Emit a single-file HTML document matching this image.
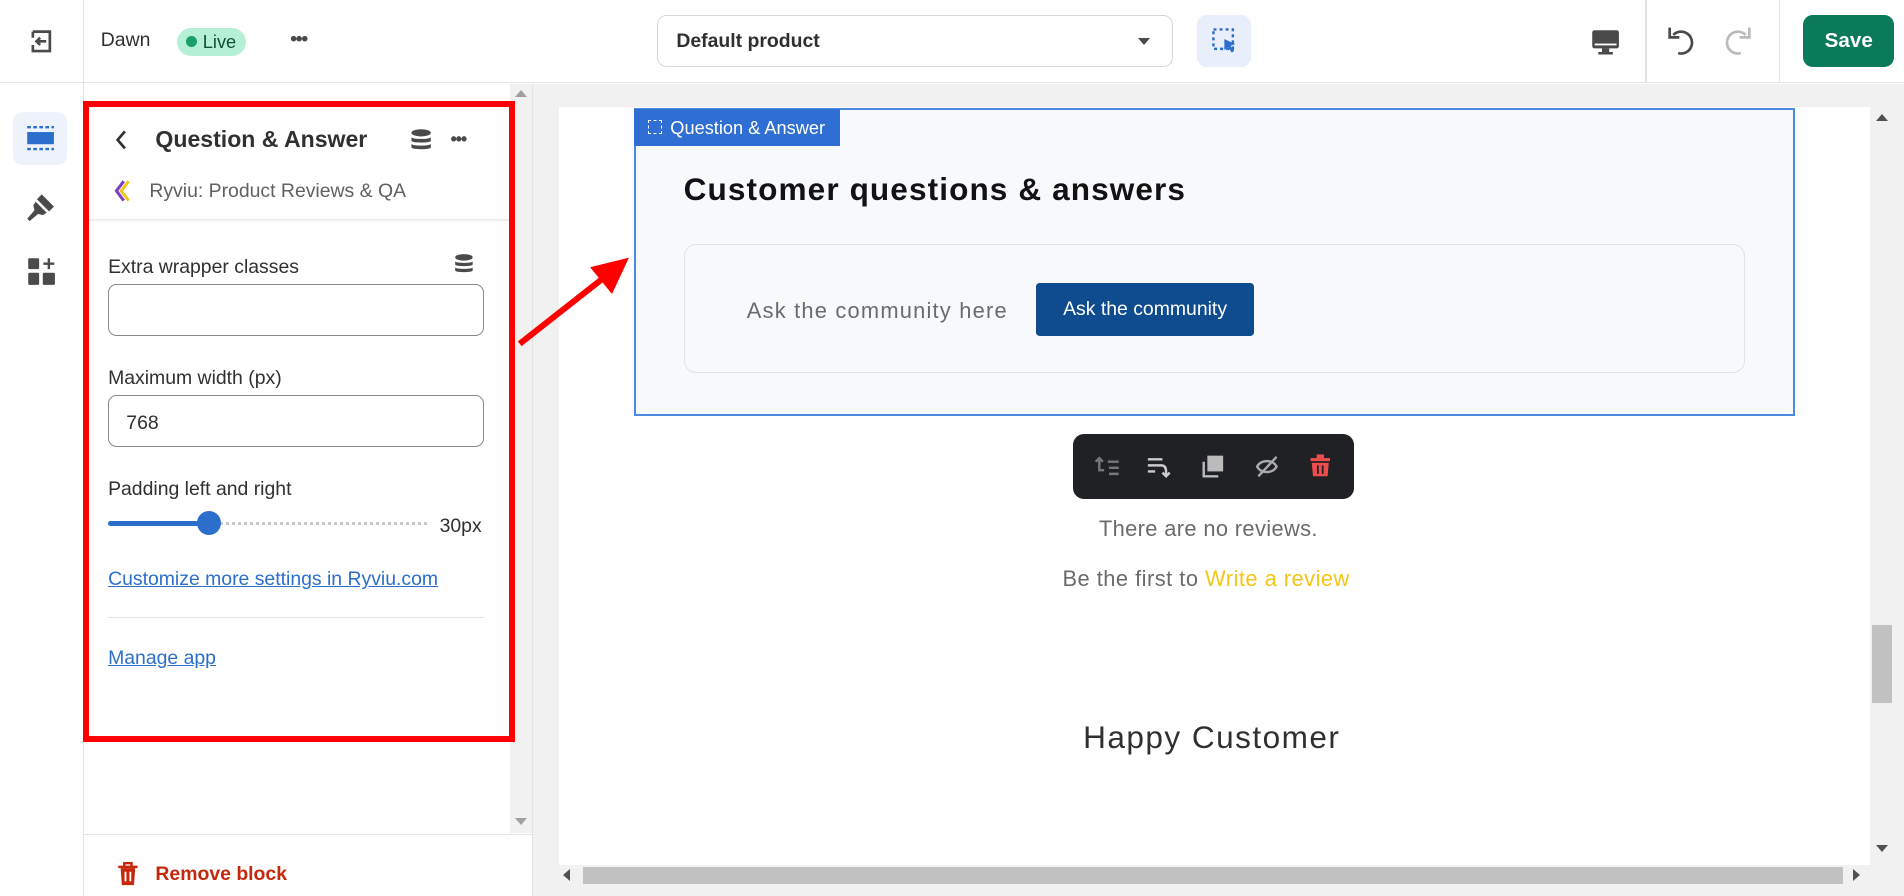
<!DOCTYPE html>
<html><head><meta charset="utf-8"><style>
*{box-sizing:border-box;margin:0;padding:0}
html,body{width:1904px;height:896px;overflow:hidden;background:#fff}
#root{zoom:1.21429;width:1568px;height:738px;position:relative;font-family:"Liberation Sans",sans-serif;color:#303030;overflow:hidden}
.a{position:absolute}
.t{position:absolute;white-space:nowrap}
svg{display:block}
</style></head><body><div id="root">
<div class="a" style="left:0;top:0;width:1568px;height:68px;border-bottom:1px solid #e3e3e3;background:#fff"></div>
<div class="a" style="left:68px;top:0;width:1px;height:738px;background:#e3e3e3"></div>
<svg class="a" style="left:23px;top:23px" width="22" height="22" viewBox="0 0 22 22"><path d="M4 3h14v16H4v-5M4 8V3" fill="none" stroke="#4a4a4a" stroke-width="2.2"/><path d="M15 11H7m3-3-3 3 3 3" fill="none" stroke="#4a4a4a" stroke-width="2.2"/></svg>
<div class="t" style="left:83px;top:24px;font-size:16px">Dawn</div>
<div class="a" style="left:146px;top:23px;width:57px;height:23px;border-radius:12px;background:#b4efd6"></div>
<div class="a" style="left:153px;top:30px;width:9px;height:9px;border-radius:50%;background:#1a9e6a"></div>
<div class="t" style="left:167px;top:26px;font-size:15px;color:#0c5132">Live</div>
<div class="t" style="left:239px;top:23px;font-size:16px;letter-spacing:-1px;color:#4a4a4a;font-weight:bold">•••</div>
<div class="a" style="left:541px;top:12px;width:425px;height:43px;border:1px solid #d6d6d6;border-radius:8px"></div>
<div class="t" style="left:557px;top:25px;font-size:16px;font-weight:bold;color:#303030">Default product</div>
<div class="a" style="left:937px;top:31px;width:0;height:0;border-left:5px solid transparent;border-right:5px solid transparent;border-top:6px solid #4a4a4a"></div>
<div class="a" style="left:986px;top:12px;width:44px;height:43px;border-radius:8px;background:#e8eefa"></div>
<svg class="a" style="left:997px;top:22px" width="24" height="24" viewBox="0 0 24 24"><rect x="2" y="2" width="16" height="16" fill="none" stroke="#2c6ecb" stroke-width="2" stroke-dasharray="2.5 2.5"/><path d="M11 10l9 4-4 1.5L19 20l-2 1-3-4.5-3 2.5z" fill="#2c6ecb"/></svg>
<svg class="a" style="left:1310px;top:24px" width="24" height="22" viewBox="0 0 24 22"><rect x="1" y="1" width="22" height="15" rx="2" fill="#4a4a4a"/><rect x="3" y="12" width="18" height="1.5" fill="#fff"/><path d="M9 16h6v3h3v2H6v-2h3z" fill="#4a4a4a"/></svg>
<div class="a" style="left:1355px;top:0;width:1px;height:68px;background:#e3e3e3"></div>
<svg class="a" style="left:1372px;top:20px" width="28" height="28" viewBox="0 0 28 28"><path d="M6 9a9 9 0 1 1 4 15" fill="none" stroke="#4a4a4a" stroke-width="2.2"/><path d="M3 3v8h8" fill="none" stroke="#4a4a4a" stroke-width="2.2"/></svg>
<svg class="a" style="left:1416px;top:20px" width="28" height="28" viewBox="0 0 28 28"><path d="M22 9a9 9 0 1 0-4 15" fill="none" stroke="#bbb" stroke-width="2.2"/><path d="M25 3v8h-8" fill="none" stroke="#bbb" stroke-width="2.2"/></svg>
<div class="a" style="left:1465px;top:0;width:1px;height:68px;background:#e3e3e3"></div>
<div class="a" style="left:1485px;top:12px;width:75px;height:43px;border-radius:8px;background:#0b7a5b;color:#fff;font-weight:bold;font-size:17px;text-align:center;line-height:43px">Save</div>
<div class="a" style="left:11px;top:92px;width:44px;height:44px;border-radius:8px;background:#eef2fb"></div>
<svg class="a" style="left:21px;top:104px" width="24" height="20" viewBox="0 0 24 20"><path d="M1 1h22M1 19h22" stroke="#2c6ecb" stroke-width="2" stroke-dasharray="3 2"/><rect x="1" y="5" width="22" height="10" fill="#2c6ecb"/></svg>
<svg class="a" style="left:21px;top:158px" width="26" height="26" viewBox="0 0 26 26"><path d="M13 2l10 10-4 4-10-10z" fill="#4a4a4a"/><path d="M8 8l9 9-3 2-4-1-7 6-2-2 6-7-1-4z" fill="#4a4a4a"/></svg>
<svg class="a" style="left:22px;top:212px" width="24" height="24" viewBox="0 0 24 24"><rect x="1" y="1" width="9" height="9" rx="1" fill="#4a4a4a"/><rect x="1" y="13" width="9" height="10" rx="1" fill="#4a4a4a"/><rect x="13" y="13" width="10" height="10" rx="1" fill="#4a4a4a"/><path d="M18 1v9M13.5 5.5h9" stroke="#4a4a4a" stroke-width="2"/></svg>
<div class="a" style="left:420px;top:69px;width:18px;height:617px;background:#f1f1f1"></div>
<div class="a" style="left:424px;top:74px;border-left:5px solid transparent;border-right:5px solid transparent;border-bottom:6px solid #a0a0a0"></div>
<div class="a" style="left:424px;top:674px;border-left:5px solid transparent;border-right:5px solid transparent;border-top:6px solid #a0a0a0"></div>
<div class="a" style="left:438px;top:69px;width:1px;height:669px;background:#e3e3e3"></div>
<div class="a" style="left:73px;top:180px;width:346px;height:3px;background:linear-gradient(#e6e6e6,#fff)"></div>
<svg class="a" style="left:94px;top:106px" width="12" height="18" viewBox="0 0 12 18"><path d="M9 2 3 9l6 7" fill="none" stroke="#303030" stroke-width="2.2"/></svg>
<div class="t" style="left:128px;top:104px;font-size:19px;font-weight:bold;color:#303030">Question &amp; Answer</div>
<svg class="a" style="left:337px;top:105px" width="20" height="20" viewBox="0 0 20 20"><ellipse cx="10" cy="4" rx="8" ry="3" fill="#4a4a4a"/><path d="M2 7.5c0 2 16 2 16 0v3c0 2-16 2-16 0zM2 13c0 2 16 2 16 0v3c0 2-16 2-16 0z" fill="#4a4a4a"/></svg>
<div class="t" style="left:371px;top:106px;font-size:15px;font-weight:bold;letter-spacing:-1px;color:#4a4a4a">•••</div>
<svg class="a" style="left:94px;top:148px" width="14" height="18" viewBox="0 0 14 18"><path d="M8 1 2 9l6 8" fill="none" stroke="#7b3fc4" stroke-width="2.5"/><path d="M12 1 6 9l6 8" fill="none" stroke="#f5c518" stroke-width="2.5"/></svg>
<div class="t" style="left:123px;top:148px;font-size:16px;color:#616161">Ryviu: Product Reviews &amp; QA</div>
<div class="t" style="left:89px;top:211px;font-size:16px">Extra wrapper classes</div>
<svg class="a" style="left:373px;top:208px" width="18" height="18" viewBox="0 0 20 20"><ellipse cx="10" cy="4" rx="8" ry="3" fill="#4a4a4a"/><path d="M2 7.5c0 2 16 2 16 0v3c0 2-16 2-16 0zM2 13c0 2 16 2 16 0v3c0 2-16 2-16 0z" fill="#4a4a4a"/></svg>
<div class="a" style="left:89px;top:234px;width:310px;height:43px;border:1px solid #8a8a8a;border-radius:7px"></div>
<div class="t" style="left:89px;top:302px;font-size:16px">Maximum width (px)</div>
<div class="a" style="left:89px;top:325px;width:310px;height:43px;border:1px solid #8a8a8a;border-radius:7px"></div>
<div class="t" style="left:104px;top:339px;font-size:16px">768</div>
<div class="t" style="left:89px;top:394px;font-size:16px">Padding left and right</div>
<div class="a" style="left:89px;top:429px;width:83px;height:4px;background:#2c6ecb;border-radius:2px"></div>
<div class="a" style="left:172px;top:430px;width:180px;height:2px;border-top:3px dotted #c8c8c8"></div>
<div class="a" style="left:162px;top:421px;width:20px;height:20px;border-radius:50%;background:#2c6ecb"></div>
<div class="t" style="left:362px;top:424px;font-size:16px">30px</div>
<div class="t" style="left:89px;top:468px;font-size:16px;color:#2c6ecb;text-decoration:underline">Customize more settings in Ryviu.com</div>
<div class="a" style="left:89px;top:508px;width:310px;height:1px;background:#e3e3e3"></div>
<div class="t" style="left:89px;top:533px;font-size:16px;color:#2c6ecb;text-decoration:underline">Manage app</div>
<div class="a" style="left:68px;top:83px;width:356px;height:528px;border:5px solid #f00"></div>
<div class="a" style="left:69px;top:687px;width:369px;height:1px;background:#e3e3e3"></div>
<svg class="a" style="left:96px;top:710px" width="18" height="20" viewBox="0 0 18 20"><path d="M1 4h16M6 4V1h6v3" fill="none" stroke="#c5280c" stroke-width="2"/><path d="M3 5l1 14h10l1-14z" fill="#c5280c"/><path d="M7 8v8M11 8v8" stroke="#fff" stroke-width="1.5"/></svg>
<div class="t" style="left:128px;top:711px;font-size:16px;font-weight:bold;color:#c5280c">Remove block</div>
<div class="a" style="left:439px;top:69px;width:1129px;height:669px;background:#f1f1f1"></div>
<div class="a" style="left:460px;top:88px;width:1080px;height:624px;background:#fff"></div>
<div class="a" style="left:1540px;top:88px;width:20px;height:624px;background:#f1f1f1"></div>
<div class="a" style="left:1542px;top:515px;width:16px;height:64px;background:#c1c1c1"></div>
<div class="a" style="left:1545px;top:94px;border-left:5px solid transparent;border-right:5px solid transparent;border-bottom:6px solid #505050"></div>
<div class="a" style="left:1545px;top:696px;border-left:5px solid transparent;border-right:5px solid transparent;border-top:6px solid #505050"></div>
<div class="a" style="left:460px;top:712px;width:1080px;height:18px;background:#f1f1f1"></div>
<div class="a" style="left:480px;top:714px;width:1038px;height:14px;background:#c1c1c1"></div>
<div class="a" style="left:464px;top:716px;border-top:5px solid transparent;border-bottom:5px solid transparent;border-right:6px solid #505050"></div>
<div class="a" style="left:1526px;top:716px;border-top:5px solid transparent;border-bottom:5px solid transparent;border-left:6px solid #505050"></div>
<div class="a" style="left:522px;top:89px;width:956px;height:254px;border:2px solid #4a8be0;background:#f7f9fc"></div>
<div class="a" style="left:522px;top:90px;width:170px;height:30px;background:#2f6fd4"></div>
<div class="a" style="left:534px;top:99px;width:11px;height:11px;border:1.5px dashed #fff"></div>
<div class="t" style="left:552px;top:97px;font-size:15px;color:#fff">Question &amp; Answer</div>
<div class="t" style="left:563px;top:141px;font-size:26px;font-weight:bold;color:#121212;letter-spacing:0.9px">Customer questions &amp; answers</div>
<div class="a" style="left:563px;top:201px;width:874px;height:106px;border:1px solid #e2e2e2;border-radius:10px"></div>
<div class="t" style="left:615px;top:245px;font-size:18px;color:#6b6b6b;letter-spacing:1px">Ask the community here</div>
<div class="a" style="left:853px;top:233px;width:180px;height:44px;background:#0f4c8f;border-radius:3px;color:#fff;font-size:16px;text-align:center;line-height:44px">Ask the community</div>
<div class="a" style="left:884px;top:357px;width:231px;height:54px;background:#1f2124;border-radius:9px"></div>
<svg class="a" style="left:899px;top:372px" width="200" height="24" viewBox="0 0 200 24">
<g stroke="#777" stroke-width="2" fill="none"><path d="M3 8l3-3 3 3M6 5v10h4M13 8h9M14 13h8M14 18h8"/></g>
<g stroke="#ccc" stroke-width="2" fill="none"><path d="M46 6h12M46 11h12M46 16h6M57 11c3 0 4 2 4 5v4m-3-3 3 3 3-3"/></g>
<path d="M92 8v12h12" stroke="#bbb" stroke-width="2" fill="none"/><rect x="95" y="3" width="13" height="13" fill="#bbb"/>
<g stroke="#aaa" stroke-width="2" fill="none"><path d="M136 12c3-6 13-6 16 0-3 6-13 6-16 0z"/><path d="M137 20 152 4"/></g>
<g fill="#ef4d4d"><rect x="180" y="5" width="16" height="2.5"/><rect x="185" y="2" width="6" height="3"/><path d="M181 9h14l-1 11h-12z"/></g><path d="M186 11v7M190 11v7" stroke="#1f2124" stroke-width="1.5"/>
</svg>
<div class="t" style="left:905px;top:425px;font-size:18px;color:#6b6b6b;letter-spacing:0.3px">There are no reviews.</div>
<div class="t" style="left:875px;top:466px;font-size:18px;color:#6b6b6b;letter-spacing:0.4px">Be the first to <span style="color:#f5c518">Write a review</span></div>
<div class="t" style="left:892px;top:592px;font-size:26px;color:#303030;letter-spacing:1.2px">Happy Customer</div>
<svg class="a" style="left:420px;top:200px" width="110" height="95" viewBox="0 0 110 95"><path d="M8 83 78 28" stroke="#f00" stroke-width="5"/><path d="M98 12 66 20 84 42z" fill="#f00"/></svg>
</div></body></html>
